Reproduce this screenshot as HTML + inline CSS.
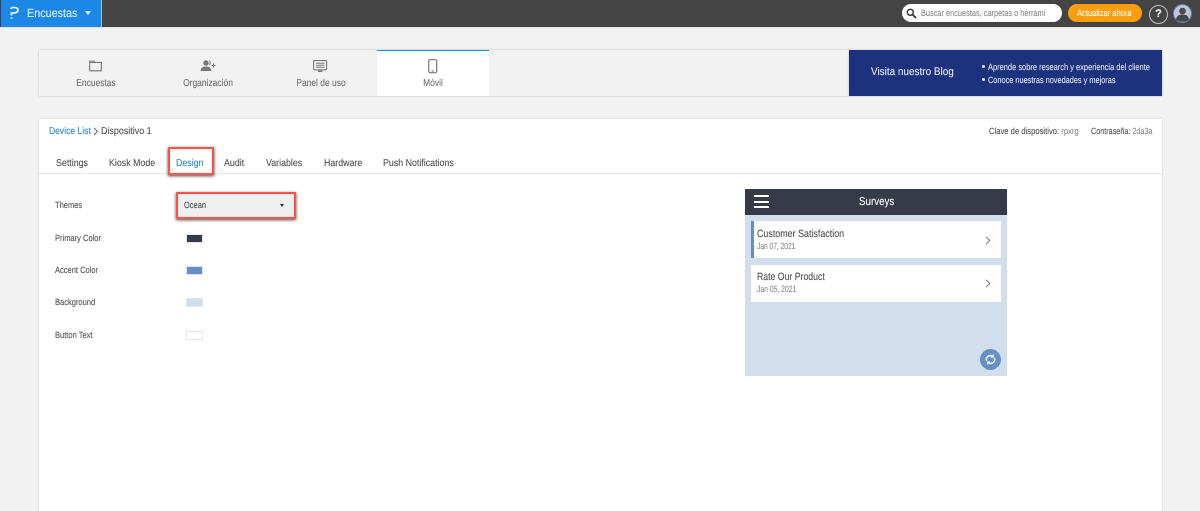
<!DOCTYPE html>
<html><head><meta charset="utf-8"><title>Encuestas</title>
<style>
html,body{margin:0;padding:0;width:1200px;height:511px;overflow:hidden;background:#f2f2f2;font-family:"Liberation Sans",sans-serif;color:#555}
.a{position:absolute;white-space:nowrap;transform-origin:0 50%;text-rendering:geometricPrecision;-webkit-text-stroke:.1px currentColor}
svg{position:absolute;overflow:visible}
.tab{top:158.5px;font-size:10px;line-height:10px;color:#4f4f4f;transform:scaleX(.884)}
.lab{left:55px;font-size:9px;color:#4f4f4f;line-height:10px;transform:scaleX(.836)}
.sw{left:186px;width:15px;height:6.5px;border:1px solid #e3e6ea}
.card{left:751px;width:250px;height:37px;background:#fff}
.nav{top:77.5px;font-size:10px;line-height:11px;color:#6f6f6f;text-align:center;width:112px;transform-origin:50% 50%;transform:scaleX(.845)}
#w{position:absolute;left:0;top:0;width:1200px;height:511px;filter:blur(.3px);overflow:hidden}
</style></head><body><div id="w">
<div class="a" style="left:0;top:0;width:1200px;height:27px;background:#444"></div>
<div class="a" style="left:0;top:27px;width:1200px;height:1px;background:#e4e4e4"></div>
<div class="a" style="left:1px;top:0;width:100px;height:27px;background:#1b87e6;border-right:1px solid #9cc"></div>
<svg style="left:9px;top:6px" width="12" height="14" viewBox="0 0 12 14"><path d="M2 3 Q2 1.5 5 1.5 Q9 1.5 9 4 Q9 7 4 7 L2.5 7 L2.5 9.5 M2.5 11.5V13" fill="none" stroke="#fff" stroke-width="1.6"/></svg>
<div class="a" style="left:27px;top:7px;font-size:12px;line-height:13px;color:#dfeeff;transform:scaleX(.9)">Encuestas</div>
<div class="a" style="left:84.5px;top:11px;border:3.5px solid transparent;border-top:4px solid #e8f3ff;border-bottom:0"></div>

<div class="a" style="left:902px;top:4px;width:160px;height:18px;border-radius:9px;background:#fff"></div>
<svg style="left:906px;top:8px" width="11" height="11" viewBox="0 0 11 11"><circle cx="4.3" cy="4.3" r="3" fill="none" stroke="#333" stroke-width="1.4"/><path d="M6.6 6.6L10 10" stroke="#333" stroke-width="1.8"/></svg>
<div class="a" style="left:921px;top:8px;font-size:9px;line-height:10px;color:#888;transform:scaleX(.82)">Buscar encuestas, carpetas o herrami</div>
<div class="a" style="left:1068px;top:4px;width:74px;height:18px;border-radius:9px;background:#fb9d0c"></div>
<div class="a" style="left:1077px;top:8px;color:#fff;font-size:9px;line-height:10px;transform:scaleX(.84)">Actualizar ahora</div>
<div class="a" style="left:1149px;top:5px;width:17px;height:17px;border:1px solid #c4c4c4;border-radius:50%;color:#fff;font-size:11px;font-weight:bold;line-height:17px;text-align:center">?</div>
<svg style="left:1173px;top:4px" width="19" height="19" viewBox="0 0 19 19"><circle cx="9.5" cy="9.5" r="9" fill="#bcc6d4" stroke="#5c7fb5" stroke-width="1"/><circle cx="9.5" cy="7" r="3.3" fill="#4a4a4a"/><path d="M3 16 Q3.5 10.5 9.5 10.5 Q15.5 10.5 16 16 Q9.5 19.5 3 16Z" fill="#454545"/></svg>

<div class="a" style="left:39px;top:50px;width:810px;height:46px;background:#f2f2f2;box-shadow:0 0 2px #bbb"></div>
<div class="a" style="left:377px;top:50px;width:112px;height:46px;background:#fff;box-sizing:border-box;border-top:1px solid #1b87e6"></div>
<div class="a" style="left:849px;top:50px;width:313px;height:46px;background:#1c327f;box-shadow:0 0 2px #bbb"></div>

<svg style="left:89px;top:60px" width="13" height="12" viewBox="0 0 13 12"><path d="M.7 10.8V1.2H5L6 2.4H12.3V10.8Z" fill="none" stroke="#777" stroke-width="1.1"/><path d="M1 2.6H6" stroke="#777"/></svg>
<svg style="left:200px;top:60px" width="16" height="12" viewBox="0 0 16 12"><circle cx="6" cy="3" r="2.7" fill="#777"/><path d="M.5 11 Q.7 6.5 6 6.5 Q11.3 6.5 11.5 11Z" fill="#777"/><path d="M9.5.5 Q11 2.5 9.5 5" fill="none" stroke="#777"/><path d="M13.5 3.5v4M11.5 5.5h4" stroke="#777"/></svg>
<svg style="left:313px;top:60px" width="15" height="13" viewBox="0 0 15 13"><rect x=".6" y=".6" width="13" height="9.2" rx="1" fill="none" stroke="#777" stroke-width="1.1"/><path d="M3 3.2h8.5M3 5.2h8.5M3 7.3h8.5" stroke="#777"/><path d="M5 11.3h4.5" stroke="#777" stroke-width="1.4"/></svg>
<svg style="left:428px;top:59px" width="10" height="15" viewBox="0 0 10 15"><rect x=".7" y=".7" width="8" height="13" rx="1.5" fill="none" stroke="#777" stroke-width="1.2"/><path d="M3.5 12h2.5" stroke="#777"/></svg>

<div class="a nav" style="left:39.5px">Encuestas</div>
<div class="a nav" style="left:152px">Organización</div>
<div class="a nav" style="left:264.5px">Panel de uso</div>
<div class="a nav" style="left:377px">Móvil</div>

<div class="a" style="left:871px;top:66px;font-size:11px;line-height:12px;color:#e4e9f5;transform:scaleX(.905)">Visita nuestro Blog</div>
<div class="a" style="left:982px;top:65px;width:3px;height:3px;border-radius:50%;background:#e4e9f5"></div>
<div class="a" style="left:982px;top:78px;width:3px;height:3px;border-radius:50%;background:#e4e9f5"></div>
<div class="a" style="left:988px;top:62px;font-size:9px;line-height:10px;color:#dfe5f3;transform:scaleX(.83)">Aprende sobre research y experiencia del cliente</div>
<div class="a" style="left:988px;top:74.5px;font-size:9px;line-height:10px;color:#dfe5f3;transform:scaleX(.817)">Conoce nuestras novedades y mejoras</div>

<div class="a" style="left:39px;top:119px;width:1123px;height:392px;background:#fff;box-shadow:0 0 2px #ccc"></div>
<div class="a" style="left:49px;top:126px;font-size:10px;line-height:11px;color:#2a86d8;transform:scaleX(.855)">Device List</div>
<svg style="left:93px;top:127px" width="6" height="9" viewBox="0 0 6 9"><path d="M1 1L4.5 4.5L1 8" fill="none" stroke="#666"/></svg>
<div class="a" style="left:101px;top:126px;font-size:10px;line-height:11px;color:#4f4f4f;transform:scaleX(.893)">Dispositivo 1</div>
<div class="a" style="left:989px;top:126px;font-size:9px;line-height:10px;color:#4f4f4f;transform:scaleX(.85)">Clave de dispositivo: <span style="color:#888">rpxrg</span></div>
<div class="a" style="left:1091px;top:126px;font-size:9px;line-height:10px;color:#4f4f4f;transform:scaleX(.803)">Contraseña: <span style="color:#888">2da3a</span></div>

<div class="a" style="left:39px;top:173px;width:1123px;height:1px;background:#e8e8e8"></div>
<div class="a tab" style="left:56px">Settings</div>
<div class="a tab" style="left:109px">Kiosk Mode</div>
<div class="a tab" style="left:176px;color:#2a86d8">Design</div>
<div class="a tab" style="left:224px">Audit</div>
<div class="a tab" style="left:266px">Variables</div>
<div class="a tab" style="left:324px">Hardware</div>
<div class="a tab" style="left:383px">Push Notifications</div>
<div class="a" style="left:168px;top:147px;width:42px;height:24px;border:2px solid #f4574a;box-shadow:0 1px 3px #444,inset 0 0 1px #999"></div>

<div class="a lab" style="top:200px">Themes</div>
<div class="a" style="left:176px;top:192px;width:116px;height:23px;background:#efefef;border:2px solid #f4574a;box-shadow:0 1px 3px #444,inset 0 0 1px #999"></div>
<div class="a" style="left:184px;top:200px;font-size:9px;line-height:10px;color:#4f4f4f;transform:scaleX(.83)">Ocean</div>
<div class="a" style="left:279.5px;top:204px;border:2.5px solid transparent;border-top:3px solid #333;border-bottom:0"></div>

<div class="a lab" style="top:233px">Primary Color</div>
<div class="a lab" style="top:265px">Accent Color</div>
<div class="a lab" style="top:297px">Background</div>
<div class="a lab" style="top:330px">Button Text</div>
<div class="a sw" style="top:234px;background:#373a47"></div>
<div class="a sw" style="top:266px;background:#6690c5"></div>
<div class="a sw" style="top:298px;background:#d2deeb"></div>
<div class="a sw" style="top:331px;background:#fff"></div>

<div class="a" style="left:745px;top:189px;width:262px;height:187px;background:#d2deeb"></div>
<div class="a" style="left:745px;top:189px;width:262px;height:26px;background:#373a47"></div>
<div class="a" style="left:754px;top:195px;width:15px;height:2px;background:#fff"></div>
<div class="a" style="left:754px;top:200.5px;width:15px;height:2px;background:#fff"></div>
<div class="a" style="left:754px;top:206px;width:15px;height:2px;background:#fff"></div>
<div class="a" style="left:859px;top:195.5px;font-size:11.5px;line-height:13px;color:#fff;transform:scaleX(.85)">Surveys</div>

<div class="a card" style="top:221px"></div>
<div class="a" style="left:751px;top:221px;width:3px;height:37px;background:#6690c5"></div>
<div class="a card" style="top:264.5px"></div>
<div class="a" style="left:757px;top:227.5px;font-size:10.5px;line-height:12px;color:#4f4f4f;transform:scaleX(.848)">Customer Satisfaction</div>
<div class="a" style="left:757px;top:241px;font-size:9px;line-height:10px;color:#888;transform:scaleX(.737)">Jan 07, 2021</div>
<div class="a" style="left:757px;top:270.5px;font-size:10.5px;line-height:12px;color:#4f4f4f;transform:scaleX(.829)">Rate Our Product</div>
<div class="a" style="left:757px;top:284px;font-size:9px;line-height:10px;color:#888;transform:scaleX(.755)">Jan 05, 2021</div>
<svg style="left:985px;top:236px" width="6" height="9" viewBox="0 0 6 9"><path d="M1 .8L4.8 4.5L1 8.2" fill="none" stroke="#777" stroke-width="1"/></svg>
<svg style="left:985px;top:279px" width="6" height="9" viewBox="0 0 6 9"><path d="M1 .8L4.8 4.5L1 8.2" fill="none" stroke="#777" stroke-width="1"/></svg>
<svg style="left:980px;top:349px" width="21" height="21" viewBox="0 0 21 21"><circle cx="10.5" cy="10.5" r="10.5" fill="#6690c5"/><path d="M6.6 12 A4 4 0 0 1 12.6 7.3M14.4 9 A4 4 0 0 1 8.4 13.7" fill="none" stroke="#fff" stroke-width="1.4"/><path d="M13.8 4.8V8.6H10.6ZM7.2 16.2V12.4H10.4Z" fill="#fff"/></svg>
</div></body></html>
